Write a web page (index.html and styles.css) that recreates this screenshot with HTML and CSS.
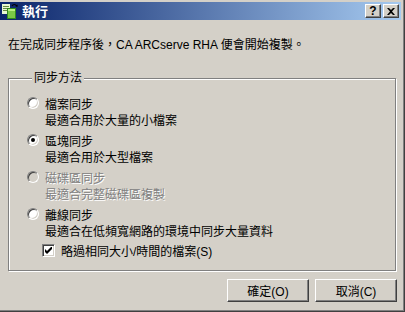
FILE: index.html
```html
<!DOCTYPE html>
<html lang="zh-Hant">
<head>
    <meta charset="UTF-8">
    <title>執行</title>
    <link rel="stylesheet" href="styles.css">
</head>
<body>
    <div class="window">
        <div class="titlebar">
            <svg class="app-icon" width="16" height="16" viewBox="0 0 16 16">
                <rect x="0" y="1" width="8" height="10" fill="#e8f8d0"/>
                <rect x="1" y="3" width="6" height="1" fill="#6a8a40"/>
                <rect x="1" y="5" width="6" height="1" fill="#6a8a40"/>
                <rect x="1" y="7" width="6" height="1" fill="#6a8a40"/>
                <rect x="5" y="5" width="9" height="11" fill="#2f8a1e"/>
                <rect x="6" y="6" width="7" height="9" fill="#7ac846"/>
                <rect x="6" y="6" width="7" height="2" fill="#b8ee80"/>
                <path d="M10 3 Q12 0 15 3" fill="none" stroke="#000" stroke-width="1.2"/>
                <path d="M13 3 L15.5 4 L15.5 1.5 Z" fill="#000"/>
            </svg>
            <span class="title">執行</span>
            <div class="caption-buttons">
                <span class="cap-btn">?</span>
                <span class="cap-btn cap-close">
                    <svg width="8" height="7" viewBox="0 0 8 7">
                        <path d="M0 0h2l2 2 2-2h2L5 3.5 8 7H6L4 5 2 7H0l3-3.5z" fill="#000"/>
                    </svg>
                </span>
            </div>
        </div>

        <div class="content">
            <p class="intro">在完成同步程序後，CA ARCserve RHA 便會開始複製。</p>

            <fieldset class="group">
                <legend>同步方法</legend>

                <div class="option">
                    <div class="radio-row"><span class="radio"></span>檔案同步</div>
                    <div class="desc">最適合用於大量的小檔案</div>
                </div>
                <div class="option">
                    <div class="radio-row"><span class="radio checked"></span>區塊同步</div>
                    <div class="desc">最適合用於大型檔案</div>
                </div>
                <div class="option disabled">
                    <div class="radio-row"><span class="radio"></span>磁碟區同步</div>
                    <div class="desc">最適合完整磁碟區複製</div>
                </div>
                <div class="option">
                    <div class="radio-row"><span class="radio"></span>離線同步</div>
                    <div class="desc">最適合在低頻寬網路的環境中同步大量資料</div>
                </div>
                <div class="check-row">
                    <span class="checkbox">
                        <svg width="7" height="7" viewBox="0 0 7 7">
                            <path d="M0 2v3l2 2 5-5V-1L2 4z" fill="#000"/>
                        </svg>
                    </span>
                    略過相同大小/時間的檔案(S)
                </div>
            </fieldset>

            <div class="actions">
                <button>確定(O)</button>
                <button>取消(C)</button>
            </div>
        </div>
    </div>
</body>
</html>
```

FILE: styles.css
```css
body {
    margin: 0;
    background-color: #d4d0c8;
    font-family: "Liberation Sans", "Noto Sans CJK TC", sans-serif;
    font-size: 12px;
    color: #000;
}
.window {
    width: 405px;
    height: 312px;
    box-sizing: border-box;
    padding: 2px 3px 0 0;
    border-right: 1px solid #404040;
    border-bottom: 1px solid #404040;
    box-shadow: inset -1px -1px 0 #808080;
    background-color: #d4d0c8;
}
.titlebar {
    height: 18px;
    display: flex;
    align-items: center;
    padding-left: 2px;
    background: linear-gradient(to right, #0a246a, #a6caf0);
}
.app-icon {
    margin-right: 4px;
}
.title {
    color: #fff;
    font-weight: bold;
    font-size: 13px;
    font-family: "Noto Sans CJK TC", sans-serif;
    line-height: 18px;
}
.caption-buttons {
    margin-left: auto;
    display: flex;
    gap: 2px;
    padding-right: 2px;
}
.cap-btn {
    width: 16px;
    height: 14px;
    box-sizing: border-box;
    display: flex;
    align-items: center;
    justify-content: center;
    background-color: #d4d0c8;
    border-top: 1px solid #fff;
    border-left: 1px solid #fff;
    border-right: 1px solid #404040;
    border-bottom: 1px solid #404040;
    box-shadow: inset -1px -1px 0 #808080;
    font-weight: bold;
    font-size: 12px;
    line-height: 12px;
}
.content {
    padding: 16px 0 0 8px;
}
.intro {
    margin: 0;
    line-height: 18px;
}
.group {
    margin: 16px 0 0 0;
    width: 388px;
    height: 201px;
    box-sizing: border-box;
    padding: 8px 0 0 18px;
    border: 1px solid #808080;
    box-shadow: inset 1px 1px 0 #fff, 1px 1px 0 #fff;
}
.group legend {
    padding: 0 2px;
    margin-left: 5px;
    line-height: 16px;
    background-color: #d4d0c8;
}
.radio-row {
    display: flex;
    align-items: center;
    height: 18px;
    gap: 6px;
}
.desc {
    height: 19px;
    line-height: 19px;
    padding-left: 18px;
}
.radio {
    width: 12px;
    height: 12px;
    box-sizing: border-box;
    border-radius: 50%;
    border: 1px solid;
    border-color: #808080 #fff #fff #808080;
    box-shadow: inset 1px 1px 0 #404040, inset -1px -1px 0 #d4d0c8;
    background-color: #fff;
    position: relative;
}
.radio.checked::after {
    content: "";
    position: absolute;
    left: 3px;
    top: 3px;
    width: 4px;
    height: 4px;
    background-color: #000;
    border-radius: 50%;
}
.disabled {
    color: #808080;
    text-shadow: 1px 1px 0 #fff;
}
.disabled .radio {
    background-color: #d4d0c8;
}
.check-row {
    display: flex;
    align-items: center;
    height: 18px;
    gap: 6px;
    padding-left: 15px;
    margin-top: -1px;
}
.checkbox {
    width: 13px;
    height: 13px;
    box-sizing: border-box;
    display: flex;
    align-items: center;
    justify-content: center;
    border: 1px solid;
    border-color: #808080 #fff #fff #808080;
    box-shadow: inset 1px 1px 0 #404040, inset -1px -1px 0 #d4d0c8;
    background-color: #fff;
}
.actions {
    display: flex;
    justify-content: flex-end;
    gap: 6px;
    padding-right: 4px;
    margin-top: 8px;
}
button {
    width: 82px;
    height: 23px;
    box-sizing: border-box;
    background-color: #d4d0c8;
    border-top: 1px solid #fff;
    border-left: 1px solid #fff;
    border-right: 1px solid #404040;
    border-bottom: 1px solid #404040;
    box-shadow: inset -1px -1px 0 #808080;
    font-family: "Liberation Sans", "Noto Sans CJK TC", sans-serif;
    font-size: 12px;
    padding: 0;
}
```
